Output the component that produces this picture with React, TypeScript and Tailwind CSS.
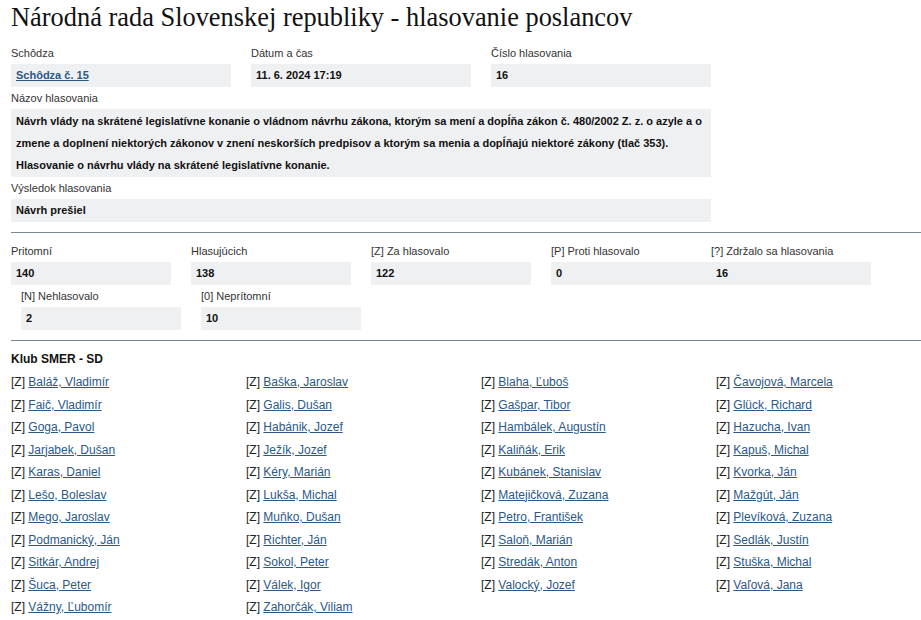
import React from 'react'

const members = [
  'Baláž, Vladimír', 'Baška, Jaroslav', 'Blaha, Ľuboš', 'Čavojová, Marcela',
  'Faič, Vladimír', 'Galis, Dušan', 'Gašpar, Tibor', 'Glück, Richard',
  'Goga, Pavol', 'Habánik, Jozef', 'Hambálek, Augustín', 'Hazucha, Ivan',
  'Jarjabek, Dušan', 'Ježík, Jozef', 'Kaliňák, Erik', 'Kapuš, Michal',
  'Karas, Daniel', 'Kéry, Marián', 'Kubánek, Stanislav', 'Kvorka, Ján',
  'Lešo, Boleslav', 'Lukša, Michal', 'Matejičková, Zuzana', 'Mažgút, Ján',
  'Mego, Jaroslav', 'Muňko, Dušan', 'Petro, František', 'Plevíková, Zuzana',
  'Podmanický, Ján', 'Richter, Ján', 'Saloň, Marián', 'Sedlák, Justín',
  'Sitkár, Andrej', 'Sokol, Peter', 'Stredák, Anton', 'Stuška, Michal',
  'Šuca, Peter', 'Válek, Igor', 'Valocký, Jozef', 'Vaľová, Jana',
  'Vážny, Ľubomír', 'Zahorčák, Viliam',
]

// popisok + sivé pole s hodnotou
function Field({label, children, className = ''}: {label: string; children: React.ReactNode; className?: string}) {
  return (
    <div className={className}>
      <div className="leading-[17px] text-[11px] text-[#333]">{label}</div>
      <div className="mt-[2px] h-[23px] bg-[#eff0f1] px-[5px] text-[11px] font-bold leading-[23px] text-[#111]">
        {children}
      </div>
    </div>
  )
}

export default function App() {
  return (
    <div className="min-h-[620px] bg-white pl-[11px] font-['Liberation_Sans',Arial,sans-serif]">
      <h1 className="pt-[2px] font-['Liberation_Serif','Times_New_Roman',serif] text-[26.4px] leading-[30px] text-[#111]">
        Národná rada Slovenskej republiky - hlasovanie poslancov
      </h1>

      <div className="mt-[13px] flex gap-[20px]">
        <Field label="Schôdza" className="w-[220px]">
          <a href="#" className="text-[#2a5888] underline">Schôdza č. 15</a>
        </Field>
        <Field label="Dátum a čas" className="w-[220px]">11. 6. 2024 17:19</Field>
        <Field label="Číslo hlasovania" className="w-[220px]">16</Field>
      </div>

      <div className="mt-[3px] w-[700px]">
        <div className="leading-[17px] text-[11px] text-[#333]">Názov hlasovania</div>
        <div className="mt-[2px] bg-[#eff0f1] px-[5px] py-[1px] text-[11px] font-bold leading-[22px] text-[#111]">
          Návrh vlády na skrátené legislatívne konanie o vládnom návrhu zákona, ktorým sa mení a dopĺňa zákon č. 480/2002 Z. z. o azyle a o zmene a doplnení niektorých zákonov v znení neskorších predpisov a ktorým sa menia a dopĺňajú niektoré zákony (tlač 353).
          <br />
          Hlasovanie o návrhu vlády na skrátené legislatívne konanie.
        </div>
      </div>

      <Field label="Výsledok hlasovania" className="mt-[3px] w-[700px]">Návrh prešiel</Field>

      <hr className="mt-[10px] border-0 border-t border-[#7b8793]" />

      <div className="mt-[10px] flex">
        <Field label="Pritomní" className="mr-[20px] w-[160px]">140</Field>
        <Field label="Hlasujúcich" className="mr-[20px] w-[160px]">138</Field>
        <Field label="[Z] Za hlasovalo" className="mr-[20px] w-[160px]">122</Field>
        <Field label="[P] Proti hlasovalo" className="w-[160px]">0</Field>
        <Field label="[?] Zdržalo sa hlasovania" className="w-[160px]">16</Field>
      </div>
      <div className="mt-[3px] flex pl-[10px]">
        <Field label="[N] Nehlasovalo" className="mr-[20px] w-[160px]">2</Field>
        <Field label="[0] Neprítomní" className="w-[160px]">10</Field>
      </div>

      <hr className="mt-[10px] border-0 border-t border-[#7b8793]" />

      <h2 className="mt-[10px] text-[12px] font-bold leading-[16px] text-[#111]">Klub SMER - SD</h2>
      <div className="mt-[4px] grid grid-cols-[235px_235px_235px_235px]">
        {members.map(name => (
          <div key={name} className="text-[12px] leading-[22.5px] text-[#222]">
            [Z]{' '}
            <a href="#" className="text-[#2a5888] underline">{name}</a>
          </div>
        ))}
      </div>
    </div>
  )
}
